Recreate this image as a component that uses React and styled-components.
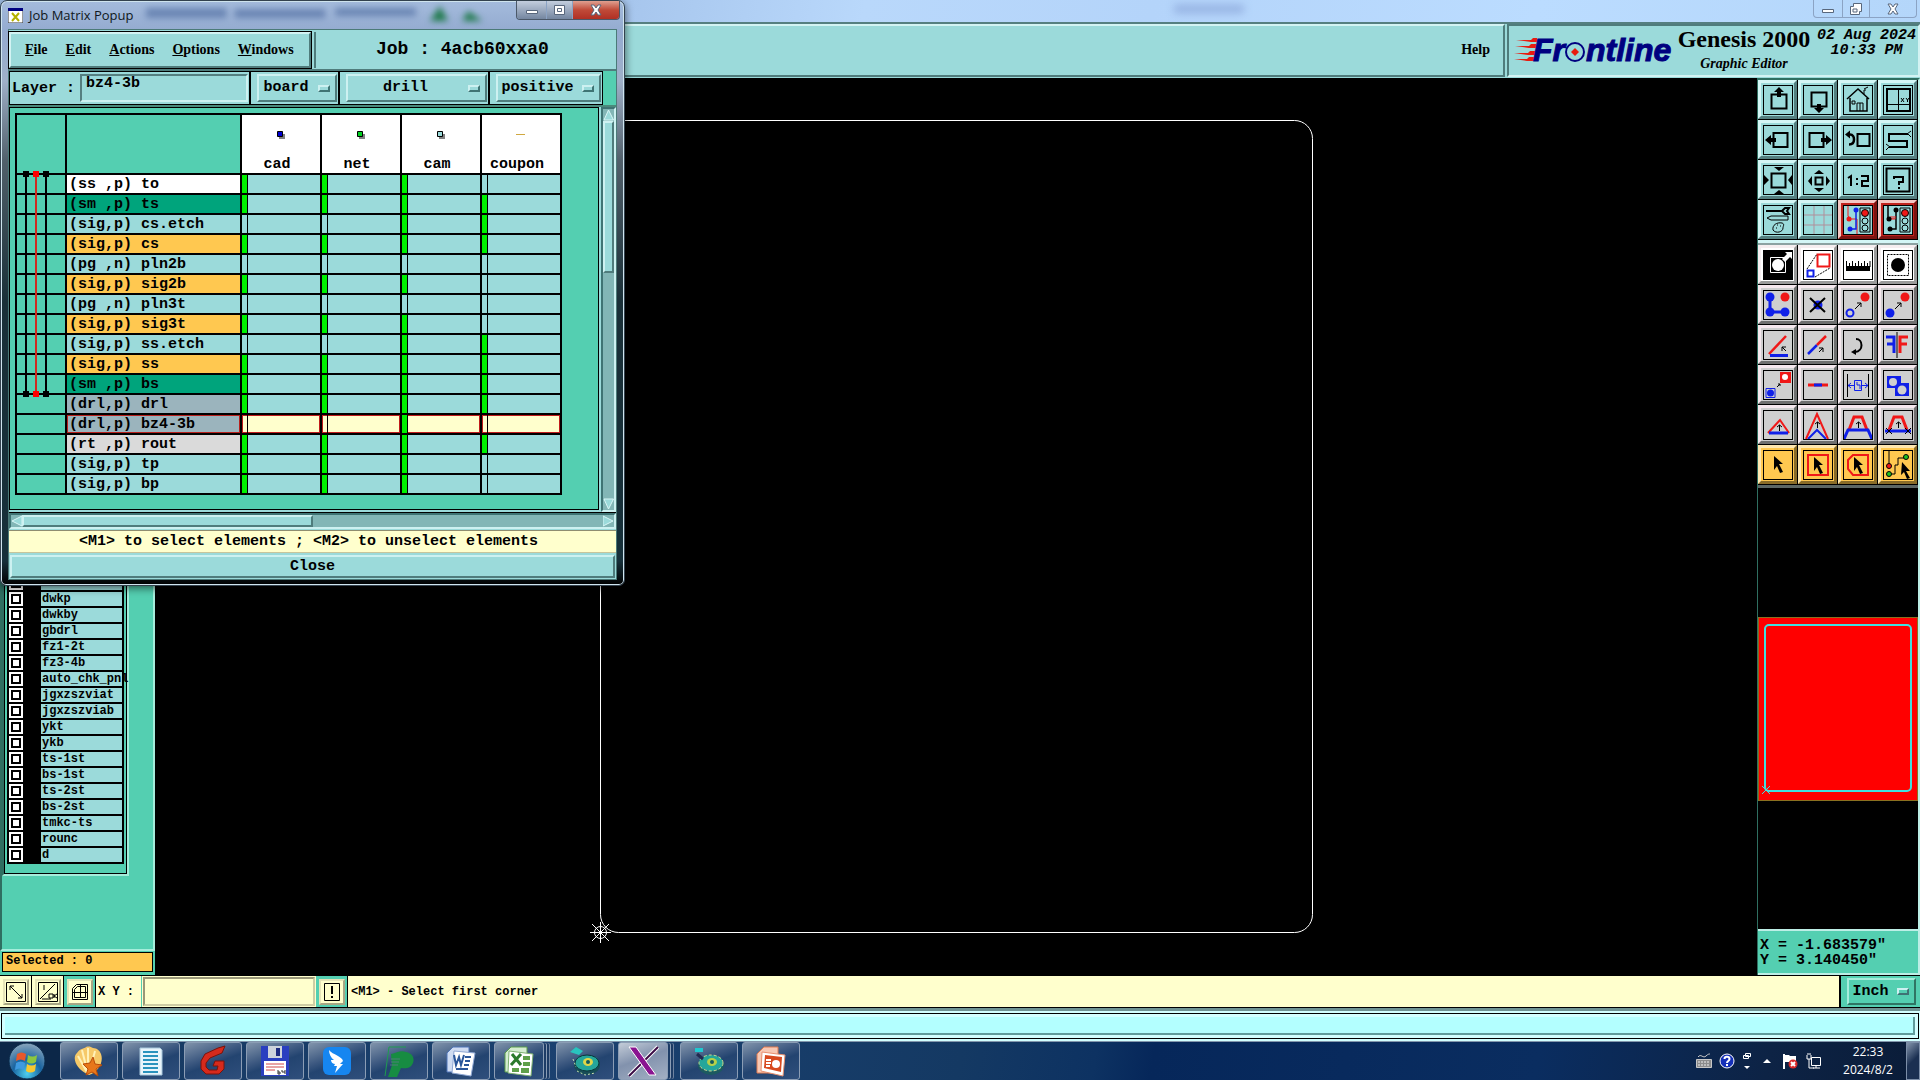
import styled, { createGlobalStyle, css } from "styled-components";

const MONO = `"Liberation Mono", "DejaVu Sans Mono", monospace`;
const SERIF = `"Liberation Serif", "DejaVu Serif", serif`;
const SANS = `"Open Sans", "Noto Sans", sans-serif`;

const CYAN = "#9bdada";
const GREEN = "#54cfb1";
const CREAM = "#ffffcd";
const AMBER = "#ffc850";
const NAVY = "#000080";

const raised = (light, dark, size = 2) => css`
  border: ${size}px solid;
  border-color: ${light} ${dark} ${dark} ${light};
`;

const GlobalStyle = createGlobalStyle`
  * {
    box-sizing: border-box;
  }
  body {
    margin: 0;
    background: #000;
    color: #000;
    font-family: ${MONO};
    overflow: hidden;
  }
  button, input, select {
    margin: 0;
    padding: 0;
    border: 0;
    border-radius: 0;
    background: none;
    color: inherit;
    font: inherit;
    appearance: none;
    outline: none;
  }
  svg {
    display: block;
  }
`;

/* ---------- main window ---------- */

const Screen = styled.div`
  position: relative;
  display: flex;
  flex-direction: column;
  height: 100vh;
`;

const TitleBar = styled.div`
  display: flex;
  justify-content: flex-end;
  height: 22px;
  padding-right: 3px;
  background: linear-gradient(100deg, #a3c2ea 30%, #b9d8fb 45%, #b4d4fa 60%, #bbdcff 80%, #b4d6fa);
`;

const TitleSmudge = styled.div`
  width: 70px;
  height: 8px;
  margin: 5px auto 0 1174px;
  background: #7d97cf;
  opacity: 0.6;
  filter: blur(4px);
`;

const WindowButtons = styled.div`
  display: flex;
  height: ${(props) => (props.$dark ? 19 : 18)}px;
  border: 1px solid ${(props) => (props.$dark ? "#4b5868" : "#8ba3c4")};
  border-top: 0;
  border-radius: 0 0 4px 4px;
  overflow: hidden;
`;

const WindowButton = styled.button`
  display: flex;
  align-items: center;
  justify-content: center;
  width: ${(props) => props.$width}px;
  background: ${(props) => props.$bg || "transparent"};
  & + & {
    border-left: 1px solid #8ba3c4;
  }
`;

const Header = styled.header`
  display: flex;
  gap: 2px;
  height: 56px;
  padding-bottom: 1px;
  border-top: 2px solid #557f80;
  background: ${CYAN};
`;

const MenuStrip = styled.div`
  flex: 1;
  display: flex;
  align-items: center;
  justify-content: flex-end;
  padding: 0 13px 2px 0;
  ${raised("#d3f3f3", "#4f7c7c")}
`;

const MenuButton = styled.button`
  font: bold 14px/20px ${SERIF};
  &::first-letter {
    text-decoration: ${(props) => (props.$plain ? "none" : "underline")};
  }
`;

const Brand = styled.div`
  display: flex;
  width: 413px;
  padding-left: 4px;
  ${raised("#4f7c7c", "#d3f3f3")}
`;

const BrandTitles = styled.div`
  display: flex;
  flex-direction: column;
  align-items: center;
  width: 134px;
`;

const Product = styled.div`
  font: bold 24px/26px ${SERIF};
  white-space: nowrap;
`;

const Editor = styled.div`
  font: italic bold 14px/24px ${SERIF};
`;

const DateBox = styled.div`
  flex: 1;
  padding: 2px 0 0 4px;
  text-align: center;
  font: italic bold 15px/15px ${MONO};
  white-space: nowrap;
`;

const Main = styled.main`
  flex: 1;
  display: flex;
  min-height: 0;
`;

const Sidebar = styled.aside`
  display: flex;
  flex-direction: column;
  justify-content: flex-end;
  width: 155px;
  background: ${GREEN};
`;

const LayerArea = styled.div`
  flex: 1;
  display: flex;
  flex-direction: column;
  justify-content: flex-end;
  align-items: flex-start;
  padding-bottom: 73px;
  border-left: 2px solid #2f6f61;
  border-right: 2px solid #a5eddb;
  border-bottom: 2px solid #a5eddb;
`;

const LayerFrame = styled.div`
  width: 127px;
  ${raised("#2f6f61", "#a5eddb")}
`;

const LayerInner = styled.div`
  border: 1px solid #000;
  border-top: 0;
  padding: 0 2px 9px 2px;
`;

const LayerList = styled.div`
  display: flex;
  flex-direction: column;
  gap: 2px;
  padding: 2px;
  background: #000;
`;

const LayerRow = styled.label`
  display: flex;
  justify-content: space-between;
  height: 14px;
  font: bold 12px/15px ${MONO};
`;

const LayerCheck = styled.input`
  width: 14px;
  height: 14px;
  background: #fff;
  box-shadow: inset 0 0 0 2px #fff, inset 0 0 0 4px #000;
`;

const LayerName = styled.span`
  width: 81px;
  padding-left: 1px;
  background: ${CYAN};
  white-space: nowrap;
`;

const Selected = styled.div`
  margin: 1px 2px 3px;
  height: 20px;
  padding-left: 3px;
  border: 1px solid #000;
  background: ${AMBER};
  font: bold 12px/17px ${MONO};
`;

const Board = styled.div`
  flex: 1;
  background: #000;
`;

const Tools = styled.aside`
  display: flex;
  flex-direction: column;
  width: 163px;
  border-top: 2px solid #2f6f61;
  border-left: 1px solid #2f6f61;
  border-right: 2px solid #bdeee6;
`;

const ToolGrid = styled.div`
  display: grid;
  grid-template-columns: repeat(4, 39px);
  grid-auto-rows: 39px;
  gap: 1px;
  padding-bottom: 1px;
  background: #000;
  border-bottom: ${(props) => props.$edge};
`;

// face, light edge, dark edge, icon ground
const toolSkins = {
  cyan: ["#9bdada", "#d4f6f6", "#557f80", "#9bdada"],
  white: ["#ffffff", "#f6eef0", "#9a9a9a", "#ffffff"],
  grey: ["#cfcfcf", "#f6e8ee", "#6f6f6f", "#cfcfcf"],
  amber: ["#ffc850", "#ffe7b0", "#8a6c28", "#ffc850"],
  alert: ["#c0241e", "#f3c8c4", "#7c1410", "#9bdada"],
};

const ToolButton = styled.button`
  display: flex;
  align-items: center;
  justify-content: center;
  background: ${(props) => toolSkins[props.$skin][0]};
  ${(props) => raised(toolSkins[props.$skin][1], toolSkins[props.$skin][2], 3)}
  svg {
    width: 30px;
    height: 30px;
    border: 1px solid #000;
    background: ${(props) => toolSkins[props.$skin][3]};
    fill: none;
    stroke: #000;
    stroke-width: 2;
  }
`;

const Navigator = styled.div`
  flex: 1;
  display: flex;
  align-items: center;
  background: #000;
`;

const RedBoard = styled.div`
  flex: 1;
  padding: 6px 5px 8px;
  background: #f00;
  border: 1px solid #8a7020;
  svg {
    overflow: visible;
  }
`;

const Coordinates = styled.output`
  display: block;
  height: 46px;
  padding: 7px 2px;
  border-top: 2px solid #bdeee6;
  border-bottom: 2px solid #bdeee6;
  background: ${GREEN};
  font: bold 15px/15px ${MONO};
  white-space: pre;
`;

const CommandBar = styled.div`
  display: flex;
  align-items: stretch;
  height: 33px;
  border-top: 1px solid #000;
  border-bottom: 1px solid #000;
  background: ${CREAM};
  font: bold 12px/32px ${MONO};
`;

const CommandCell = styled.div`
  display: flex;
  align-items: center;
  justify-content: center;
  width: 32px;
  border-right: 1px solid #000;
  background: ${(props) => (props.$green ? GREEN : CREAM)};
`;

const CommandButton = styled.button`
  width: 26px;
  height: 26px;
  background: ${CREAM};
  ${raised("#e6e4b8", "#a8a684")}
  svg {
    width: 22px;
    height: 22px;
    fill: none;
    stroke: #000;
    stroke-width: 1;
  }
`;

const CommandLabel = styled.label`
  width: 46px;
  padding-left: 2px;
  border-right: 1px solid ${GREEN};
`;

const CommandInput = styled.input`
  width: 172px;
  margin: 1px 1px;
  padding-left: 4px;
  ${raised("#9a9878", "#cfcda4")}
`;

const CommandHint = styled.div`
  flex: 1;
  padding-left: 3px;
`;

const UnitCell = styled.div`
  display: flex;
  width: 81px;
  padding: 2px 4px 2px 6px;
  border-left: 2px solid #000;
  background: ${GREEN};
`;

const FooterBar = styled.div`
  height: 33px;
  padding: 2px 1px;
  background: #d2ffff;
  border-top: 3px solid #6f9393;
`;

const FooterInner = styled.div`
  height: 26px;
  padding: 3px;
  border: 1px solid #000;
  div {
    height: 18px;
    background: #b3ffff;
    border-right: 2px solid #5f9c9c;
    border-bottom: 2px solid #5f9c9c;
  }
`;

/* ---------- option menus ---------- */

const OptionBox = styled.div`
  flex: 1;
  display: flex;
  align-items: center;
  padding: 0 5px 0 3px;
  font: bold 15px/20px ${MONO};
  ${(props) => raised(props.$green ? "#a5eddb" : "#cdf1f1", props.$green ? "#2f7564" : "#4f7c7c")}
`;

const OptionSelect = styled.select`
  flex: 1;
  min-width: 0;
  padding-right: 8px;
  text-align: center;
  text-align-last: center;
`;

const Knob = styled.span`
  width: 12px;
  height: 7px;
  ${raised("#cdf1f1", "#3f7474")}
`;

const OptionMenu = ({ label, value, green }) => (
  <OptionBox $green={green}>
    <OptionSelect aria-label={label} defaultValue={value}>
      <option>{value}</option>
    </OptionSelect>
    <Knob />
  </OptionBox>
);

/* ---------- job matrix popup ---------- */

const Popup = styled.section`
  position: absolute;
  top: 0;
  left: 0;
  width: 625px;
  padding: 0 7px 5px;
  border: 1px solid #33424e;
  border-radius: 7px 7px 6px 6px;
  background: linear-gradient(180deg, #a4bbdc 0, #94abd0 30px, #9fb0c8 80px, #51606b 160px, #1a3038 300px, #16303a 560px, #000 100%);
  box-shadow: inset 0 0 0 1px #cfe4ee, 0 2px 8px rgba(0, 0, 0, 0.6);
`;

const PopupTitle = styled.div`
  display: flex;
  height: 28px;
  margin-right: -3px;
  color: #101820;
  font: 13px/28px ${SANS};
`;

const PopupIcon = styled.svg`
  width: 15px;
  height: 15px;
  margin: 7px 6px 0 0;
`;

const Reflection = styled.svg`
  flex: 1;
  height: 28px;
  filter: blur(3px);
`;

const PopupBody = styled.div`
  display: flex;
  flex-direction: column;
  background: ${CYAN};
  border: 1px solid #4b7a78;
`;

const MenuRow = styled.div`
  display: flex;
  gap: 3px;
  height: 41px;
  border-bottom: 2px solid #4f7c7c;
  padding: 2px 0 1px;
`;

const PopupMenu = styled.nav`
  display: flex;
  align-items: center;
  gap: 18px;
  width: 302px;
  padding-left: 14px;
  outline: 1px solid #000;
  ${raised("#d3f3f3", "#4f7c7c")}
`;

const JobName = styled.h1`
  flex: 1;
  margin: 0;
  padding-left: 60px;
  border-left: 2px solid #4f7c7c;
  font: bold 18px/34px ${MONO};
  white-space: pre;
`;

const LayerBar = styled.div`
  display: flex;
  height: 34px;
  padding-right: 13px;
  background: ${GREEN};
  font: bold 15px/30px ${MONO};
`;

const LayerField = styled.div`
  display: flex;
  width: 241px;
  padding: 2px 1px 2px 2px;
  border: 1px solid #000;
  background: ${CYAN};
  label {
    width: 68px;
    white-space: pre;
  }
`;

const LayerInput = styled.input`
  flex: 1;
  min-width: 0;
  padding: 0 0 8px 4px;
  line-height: 16px;
  ${raised("#557f80", "#cdf1f1")}
`;

const OptionCell = styled.div`
  display: flex;
  flex: ${(props) => props.$grow};
  padding: 2px 1px 2px 6px;
  border: 1px solid #000;
  background: ${CYAN};
`;

const MatrixArea = styled.div`
  display: flex;
  height: 408px;
  gap: 2px;
  background: ${CYAN};
  border-top: 2px solid #4b8a7c;
  border-bottom: 1px solid #000;
`;

const MatrixPane = styled.div`
  position: relative;
  flex: 1;
  margin-bottom: 2px;
  padding: 5px 0 0 5px;
  border: 1px solid #000;
  background: ${GREEN};
`;

const Table = styled.table`
  border-spacing: 2px;
  background: #000;
  font: bold 15px/16px ${MONO};
  white-space: pre;
  table-layout: fixed;
  width: 547px;
  td,
  th {
    height: 18px;
    padding: 0;
    font-weight: bold;
    text-align: left;
  }
`;

const Corner = styled.th`
  width: ${(props) => props.$width}px;
  background: ${GREEN};
`;

const StepHead = styled.th`
  background: #fff;
  && {
    height: 58px;
    text-align: center;
    vertical-align: bottom;
  }
  svg {
    margin: 0 auto 15px;
  }
  span {
    display: block;
    padding-right: 8px;
  }
`;

const Gutter = styled.td`
  background: ${GREEN};
`;

const LayerCell = styled.th`
  background: ${(props) => props.$bg};
  text-indent: 2px;
  box-shadow: ${(props) => (props.$on ? "inset 0 0 0 1px #b8201c" : "none")};
  && {
    padding-top: 2px;
  }
`;

const StepCell = styled.td`
  background: ${(props) => (props.$on ? CREAM : CYAN)};
  box-shadow: ${(props) => (props.$on ? "inset 0 0 0 1px #c01c1c" : "none")};
`;

const Mark = styled.span`
  display: block;
  width: 6px;
  height: 18px;
  border-right: 1px solid #000;
  background: ${(props) => (props.$filled ? "#00f000" : "transparent")};
`;

const DrillSpans = styled.svg`
  position: absolute;
  top: 62px;
  left: 11px;
  width: 40px;
  height: 230px;
`;

const ScrollTrack = styled.div`
  display: flex;
  flex-direction: ${(props) => (props.$vertical ? "column" : "row")};
  ${(props) => (props.$vertical ? "width: 15px;" : "height: 16px;")}
  background: #82b6b6;
  ${raised("#3f7474", "#cdf1f1")}
  svg {
    flex: none;
  }
`;

const ScrollThumb = styled.div`
  flex: none;
  ${(props) => (props.$vertical ? "height: 152px;" : "width: 291px;")}
  margin-${(props) => (props.$vertical ? "bottom" : "right")}: auto;
  background: ${CYAN};
  ${raised("#cdf1f1", "#4f7c7c")}
`;

const PopupHint = styled.div`
  height: 23px;
  margin-top: 1px;
  padding-right: 8px;
  border-top: 1px solid #8f8d70;
  border-bottom: 1px solid #c7c59c;
  background: ${CREAM};
  font: bold 15px/22px ${MONO};
  text-align: center;
`;

const CloseButton = styled.button`
  height: 23px;
  margin: 2px 1px 1px;
  font: bold 15px/20px ${MONO};
  ${raised("#cdf1f1", "#4f7c7c")}
`;

/* ---------- taskbar ---------- */

const Taskbar = styled.footer`
  display: flex;
  align-items: stretch;
  height: 39px;
  border-top: 1px solid #8397ac;
  background: linear-gradient(100deg, #16385f 0%, #1b4170 30%, #143963 50%, #0d3262 57%, #06275a 60%, #0a2d60 80%, #0d2345 92%, #0a1c38 100%);
`;

const StartButton = styled.button`
  width: 60px;
  padding-left: 8px;
  background: #0c2748;
`;

const Tasks = styled.div`
  flex: 1;
  display: flex;
  gap: 4px;
`;

const Task = styled.button`
  display: flex;
  align-items: center;
  justify-content: center;
  width: 58px;
  border: 1px solid #8b9db5;
  border-radius: 3px;
  background: ${(props) =>
    props.$active
      ? "linear-gradient(160deg, #c3ccd8, #8292ad 45%, #a3b0c4)"
      : "linear-gradient(160deg, #8194ab 0, #3c5880 40%, #234470 55%, #2f4f7c)"};
  ${(props) =>
    props.$stacked &&
    css`
      width: 50px;
      margin-right: 8px;
      box-shadow: 3px 0 0 -1px #1d3c66, 4px 0 0 -1px #8b9db5, 6px 0 0 -1px #1d3c66, 7px 0 0 -1px #6f83a0;
    `}
`;

const Tray = styled.div`
  display: flex;
  align-items: center;
  color: #fff;
`;

const TrayIcons = styled.div`
  display: flex;
  align-items: center;
  gap: 7px;
`;

const Clock = styled.time`
  width: 78px;
  padding-left: 2px;
  margin-left: 6px;
  text-align: center;
  font: 12px/18px ${SANS};
`;

const ShowDesktop = styled.button`
  align-self: stretch;
  width: 14px;
  border: 1px solid #7c8ea8;
  background: linear-gradient(135deg, #8394ab, #1b3052 50%);
`;

/* ---------- data ---------- */

const matrixRows = [
  ["(ss ,p) to", "#fff", "1110"],
  ["(sm ,p) ts", "#00a47c", "1111"],
  ["(sig,p) cs.etch", CYAN, "0011"],
  ["(sig,p) cs", AMBER, "1111"],
  ["(pg ,n) pln2b", CYAN, "0000"],
  ["(sig,p) sig2b", AMBER, "1110"],
  ["(pg ,n) pln3t", CYAN, "0000"],
  ["(sig,p) sig3t", AMBER, "1110"],
  ["(sig,p) ss.etch", CYAN, "0011"],
  ["(sig,p) ss", AMBER, "1111"],
  ["(sm ,p) bs", "#00a47c", "1111"],
  ["(drl,p) drl", "#9bb4bd", "1111"],
  ["(drl,p) bz4-3b", "#9bb4bd", "0010"],
  ["(rt ,p) rout", "#dadada", "1111"],
  ["(sig,p) tp", CYAN, "1110"],
  ["(sig,p) bp", CYAN, "1110"],
];

const steps = [
  ["cad", "#0000d0"],
  ["net", "#00d020"],
  ["cam", CYAN],
  ["coupon", null],
];

const layers = [
  "",
  "dwkp",
  "dwkby",
  "gbdrl",
  "fz1-2t",
  "fz3-4b",
  "auto_chk_pnl",
  "jgxzszviat",
  "jgxzszviab",
  "ykt",
  "ykb",
  "ts-1st",
  "bs-1st",
  "ts-2st",
  "bs-2st",
  "tmkc-ts",
  "rounc",
  "d",
];

const RED = "#f01818";
const BLUE = "#1020e8";

const Arrow = (props) => (
  <path d="M10 8l8 9h-4l4 7-3 1-3-7-3 3z" fill="#000" stroke="none" {...props} />
);

const viewTools = [
  ["Pan up", "cyan", <><path d="M7.500 8.500h15v14h-15z" /><path d="M15 1l5 5h-3v5h-4V6h-3z" fill="#000" stroke="none" /></>],
  ["Pan down", "cyan", <><path d="M7.500 6.500h15v14h-15z" /><path d="M15 27l5-5h-3v-4h-4v4h-3z" fill="#000" stroke="none" /></>],
  ["Home", "cyan", <><path d="M3 13L14 3l11 10M6 12v13h17V12" strokeWidth="1.500" /><path d="M20 8V4h2M20 3l4-2M13 25v-8h6v8M16 17v8M8 15h3v3H8z" strokeWidth="1" /></>],
  ["Coordinates", "cyan", <><path d="M3 3h23v22H3z" /><path d="M14.500 3v22M3 18.500h23" strokeWidth="1" /><path d="M17 12l3 4M20 12l-3 4M22 12l1.500 2 1.500-2M23.500 14v2" strokeWidth="1" /></>],
  ["Pan left", "cyan", <><path d="M9.500 7h14v14h-14z" /><path d="M1 14l6-5v3h5v4H7v3z" fill="#000" stroke="none" /></>],
  ["Pan right", "cyan", <><path d="M5.500 7h14v14h-14z" /><path d="M28 14l-6-5v3h-5v4h5v3z" fill="#000" stroke="none" /></>],
  ["Previous view", "cyan", <><path d="M13.500 8h12v12h-12z" /><path d="M3 8.500h3c3 0 4 3 4 5s-1 5-5 5" strokeWidth="2.500" /><path d="M1 8.500l5-4v8z" fill="#000" stroke="none" /></>],
  ["Serpentine", "cyan", <><path d="M24 8H5v7h18v6H5" /><path d="M23 8l4-3M24 8l3 3M6 21l-4-3M5 21l-3 3" strokeWidth="1" /></>],
  ["Zoom in", "cyan", <><path d="M7.500 7.500h14v14h-14z" /><path d="M15 5l-5-4h10zM15 24l-5 4h10zM5 14L0 9v10zM24 14l4-5v10z" fill="#000" stroke="none" /></>],
  ["Zoom out", "cyan", <><path d="M11.500 11.500h7v7h-7z" /><path d="M15 4l-5 4h10zM15 26l-5-4h10zM4 15l4-5v10zM26 15l-4-5v10z" fill="#000" stroke="none" /></>],
  ["Scale 1:2", "cyan", <path d="M4 12l3-2v10M13 12v2M13 17v2M17 10h7v5h-6v5h7" />],
  ["Query", "cyan", <><path d="M2.500 2.500h23v23h-23z" /><path d="M10 13v-2h9v5h-4v3M15 21v2" /></>],
  ["Options", "cyan", <><path d="M2 5h17M18 5l3-3h4l-2 3 2 3h-4z" strokeWidth="2" /><path d="M3 12l4-2h17v4H7z" strokeWidth="1" /><path d="M9 24c-1-5 4-8 9-7 3 1 1 3 1 5 0 4-7 6-10 2zM13 19h1M16 20h1M12 22h1" strokeWidth="1" /></>],
  ["Grid", "cyan", <path d="M10 0v28M20 0v28M0 9h28M0 19h28" stroke="#b08f9a" strokeWidth="1" />],
  ["Control", "alert", <><path d="M4 0v10l2 3h7v15" stroke={RED} strokeWidth="1" /><path d="M12 5v18H7" stroke={BLUE} strokeWidth="1.500" /><g stroke="none"><circle cx="5" cy="13" r="2.500" fill={RED} /><circle cx="12" cy="4" r="2.500" fill={BLUE} /><circle cx="6" cy="23" r="2.500" fill={BLUE} /></g><g strokeWidth="1"><path d="M16 2h10v24H16z" /><circle cx="21" cy="7" r="3.500" fill={RED} /><circle cx="21" cy="15" r="3" /><circle cx="21" cy="22" r="3" /></g></>],
  ["Netlist control", "alert", <><path d="M4 0v13M12 5v18H7" strokeWidth="1.500" /><path d="M5 13h6M7 10v3M9 10v3M11 10v3" stroke={RED} strokeWidth="1" /><g stroke="none" fill="#000"><circle cx="5" cy="13" r="2.500" /><circle cx="12" cy="4" r="2.500" /><circle cx="6" cy="23" r="2.500" /></g><g strokeWidth="1"><path d="M16 2h10v24H16z" /><circle cx="21" cy="7" r="3.500" fill={RED} /><circle cx="21" cy="15" r="3" /><circle cx="21" cy="22" r="3" /></g></>],
];

const editTools = [
  ["Lens", "white", <><path d="M0 0h28v28H0z" fill="#000" stroke="none" /><path d="M6.500 6.500h15v15h-15z" stroke="#fff" strokeWidth="1" /><circle cx="14" cy="14" r="6" fill="#fff" stroke="none" /><path d="M18 8l5-5-2-2h7v7l-2-2-5 5z" fill="#fff" stroke="none" /></>],
  ["Resize", "white", <><path d="M13.500 3.500h12v12h-12z" stroke={RED} /><path d="M3.500 19.500h6v6h-6z" stroke={BLUE} /><path d="M3 18L13 3M11 26l15-9" strokeWidth="1" strokeDasharray="2 1" /></>],
  ["Measure", "white", <><path d="M2 17.500h24" strokeWidth="5" /><path d="M2.500 10v6M5.500 12v4M8.500 10v6M11.500 12v4M14.500 10v6M17.500 12v4M20.500 10v6M23.500 12v4M26 10v6" strokeWidth="1" /></>],
  ["Select shape", "white", <><path d="M3.500 3.500h21v21h-21z" strokeWidth="1" strokeDasharray="2 1" /><circle cx="14" cy="14" r="7" fill="#000" stroke="none" /></>],
  ["Select net", "grey", <><path d="M6 6v15h14" stroke={BLUE} strokeWidth="3" /><g fill={BLUE} stroke="none"><circle cx="6" cy="6" r="4.500" /><circle cx="6" cy="21" r="4.500" /><circle cx="21" cy="21" r="4.500" /><circle cx="21" cy="6" r="4.500" fill={RED} /></g></>],
  ["Delete", "grey", <><circle cx="14" cy="14" r="4.500" fill={BLUE} stroke="none" /><path d="M6 7l15 14M21 7L6 21" /></>],
  ["Copy", "grey", <><circle cx="6" cy="22" r="3.500" stroke={BLUE} /><circle cx="21" cy="6" r="4.500" fill={RED} stroke="none" /><path d="M11 18l6-6M13 12h4v4" strokeWidth="1" /></>],
  ["Move", "grey", <><circle cx="6" cy="22" r="4.500" fill={BLUE} stroke="none" /><circle cx="21" cy="6" r="4.500" fill={RED} stroke="none" /><path d="M11 18l6-6M13 12h4v4" strokeWidth="1" /></>],
  ["Rotate", "grey", <><path d="M5 23L22 5" stroke={RED} strokeWidth="2.500" /><path d="M6 24.500h18" stroke={BLUE} strokeWidth="3" /><path d="M22 20l-4-4M18 20v-4h4" strokeWidth="1" /></>],
  ["Stretch", "grey", <><path d="M4 23l9-9" stroke={BLUE} strokeWidth="2.500" /><path d="M13 14l9-9" stroke={RED} strokeWidth="2.500" /><path d="M15 21l4-4M15 17h4v4" strokeWidth="1" /></>],
  ["Undo", "grey", <><path d="M12 8c7 0 8 12-1 13" /><path d="M7 21l5-3v6z" fill="#000" stroke="none" /></>],
  ["Mirror", "grey", <><path d="M2 6h8v16M3 13h7" stroke={BLUE} strokeWidth="3" /><path d="M24 6h-8v16M23 13h-7" stroke={RED} strokeWidth="3" /><path d="M13 1v26" strokeWidth="1" /></>],
  ["Replace", "grey", <><path d="M16 1h11v11H16z" fill={RED} stroke="none" /><circle cx="21" cy="6" r="3" fill="#fff" stroke="none" /><path d="M2 17.500h9v9H2z" stroke={BLUE} strokeWidth="1" /><circle cx="6.500" cy="22" r="3.500" fill={BLUE} stroke="none" /><path d="M13 16l3-3M14 13h2v2" strokeWidth="1" /></>],
  ["Join lines", "grey", <><path d="M4 14h20" stroke={RED} strokeWidth="3" /><path d="M10 14h8" stroke={BLUE} strokeWidth="3" /></>],
  ["Spacing", "grey", <><path d="M3.500 3v23M24.500 3v23" strokeWidth="1" /><path d="M4 14.500h6M18 14.500h6M7 12l-3 2.500L7 17M21 12l3 2.500L21 17M10.500 9.500h7v10h-7zM13 11v3h3v4" stroke={BLUE} strokeWidth="1" /></>],
  ["Merge", "grey", <><path d="M3 5h14v7h8v13H11v-8H3z" fill={BLUE} stroke="none" /><circle cx="9" cy="11" r="4" fill="#cfcfcf" stroke="none" /><circle cx="18" cy="19" r="4.500" fill="#cfcfcf" stroke="none" /></>],
  ["Arc segment", "grey", <><path d="M4 22L16 9l9 13" stroke={RED} /><path d="M5 22h19" stroke={BLUE} strokeWidth="3" /><path d="M15.500 20v-6M13 16l2.500-2 2.500 2" strokeWidth="1" /></>],
  ["Peak segment", "grey", <><path d="M2 28L13 3l11 25" stroke={RED} /><path d="M4 28l9-9 9 9" stroke={BLUE} /><path d="M13.500 17v-6M11 13l2.500-2 2.500 2" strokeWidth="1" /></>],
  ["Slide segment", "grey", <><path d="M5 19L10 6h8l5 13" stroke={RED} strokeWidth="3" /><path d="M0 28l4-9h20l4 9" stroke={BLUE} strokeWidth="3" /><path d="M14.500 17v-6M12 13l2.500-2 2.500 2" strokeWidth="1" /></>],
  ["Slide ends", "grey", <><path d="M5 19L10 6h8l5 13" stroke={RED} strokeWidth="3" /><path d="M1 20h26" stroke={BLUE} strokeWidth="3" /><path d="M14.500 17v-6M12 13l2.500-2 2.500 2M2 17l6 6M8 17l-6 6M21 17l6 6M27 17l-6 6" strokeWidth="1" /></>],
  ["Select feature", "amber", <path d="M10 5l9 8h-4l4 8-3 1-3-7-3 4z" fill="#000" stroke="none" />],
  ["Select in box", "amber", <><path d="M4 4h20v20H4z" stroke={RED} /><path d="M10 6l9 8h-4l4 8-3 1-3-7-3 4z" fill="#000" stroke="none" /></>],
  ["Select in polygon", "amber", <><path d="M9 4h15v20H9l-5-6V9z" stroke={RED} /><path d="M10 6l9 8h-4l4 8-3 1-3-7-3 4z" fill="#000" stroke="none" /></>],
  ["Select connected", "amber", <><path d="M5 0v15M5 23h6v-9h3V7h8" strokeWidth="1" /><g strokeWidth="1"><circle cx="5" cy="15" r="2.500" fill={RED} /><circle cx="5" cy="23" r="2.500" fill="#20c020" /><circle cx="22" cy="6" r="2.500" fill="#20c020" /></g><Arrow transform="translate(8 3)" /></>],
];

const tasks = [
  { name: "Shell browser", art: <><path d="M16 30C2 24-1 12 4 8c3-5 7-4 9-6 3-1 5 0 7 1 4 0 7 3 8 6 3 8-3 18-12 21z" fill="#f6c968" /><path d="M15 29L5 11M15 29L9 5M15 29V3M16 29l6-23" stroke="#fff1b8" strokeWidth="2" /><path d="M20 12l2 7 7 1-6 4 2 7-6-4-6 3 2-6-5-5 7-1z" fill="#e8771a" stroke="#b84b08" /></> },
  { name: "Notepad", art: <><path d="M5 3h20l2 2v25H5z" fill="#e8f4fb" stroke="#a8c8dc" /><path d="M8 7h15M8 11h15M8 15h15M8 19h15M8 23h15M8 27h15" stroke="#2a92bd" strokeWidth="2" /></> },
  { name: "Genesis", art: <path d="M28 1l-7 2-13 6-4 7v8l5 5h13l5-5v-8h-9l-2 5h5l-1 4h-8l-3-3v-4l4-5 12-5z" fill="#d62a1c" stroke="#7a130c" /> },
  { name: "Save", art: <><path d="M2 1h28v30H2z" fill="#2a3fc0" /><path d="M9 1h14v12H9z" fill="#cdd3dc" /><path d="M17 3h4v8h-4z" fill="#1c2a80" /><path d="M5 16h22v14H5z" fill="#fff" /><path d="M7 19h18M7 22h18M7 25h9" stroke="#d04848" /><path d="M19 25v4h2v-2h-2M23 25v2h3M26 25v4" stroke="#333" fill="none" /></> },
  { name: "DingTalk", art: <><rect x="2" y="2" width="28" height="28" rx="6" fill="#1686f0" /><path d="M8 5c4 5 13 6 14 11l-3 3h3l-8 9 2-7h-3l1-2c-3 0-4-3-4-4h3c-3-2-5-6-5-10z" fill="#fff" /></> },
  { name: "Peak", art: <><path d="M2 31L6 2h17" fill="none" stroke="#1e9c50" /><path d="M8 9c6-1 9-4 15-2 6 1 9 6 7 11-2 5-7 6-12 5l-4 9H5l4-12z" fill="#178c42" /><path d="M8 14h9M8 17h8M7 20h8" stroke="#4f7f78" /></> },
  { name: "Word", art: <><path d="M2 8l6-6h16v25H2z" fill="#cfdcf2" stroke="#4f74b8" /><path d="M9 6l21 2-4 23L7 28z" fill="#fff" stroke="#8fa8d4" /><path d="M9 10l2 10 3-8 2 8 3-10M20 12h6M20 16h5M19 20h5M11 24h12" fill="none" stroke="#2b579a" strokeWidth="2" /></> },
  { name: "Excel", stacked: true, art: <><path d="M2 8l6-6h16v25H2z" fill="#d4ecd0" stroke="#5a9c4c" /><path d="M6 6l24 3-2 22L5 28z" fill="#fff" stroke="#7db070" /><path d="M9 9l9 11M18 9L8 20" stroke="#2c7a2c" strokeWidth="3" /><path d="M20 11h7v4h-7zM20 17h7v4h-7zM9 23h7v4H9zM18 23h8v5h-8z" fill="#5fa04a" /></> },
  { name: "InCAM", art: <><ellipse cx="18" cy="20" rx="13" ry="10" fill="#174c56" /><ellipse cx="18" cy="18" rx="12" ry="8" fill="#25a69a" stroke="#0a343a" /><ellipse cx="19" cy="17" rx="5" ry="4" fill="#e0d648" /><ellipse cx="19" cy="17" rx="2" ry="2" fill="#135c60" /><path d="M1 7l6-5 7 4-4 4z" fill="#29c4be" /><path d="M4 14l3 8M8 26l8 4 10-2" stroke="#c8e0b0" fill="none" strokeDasharray="2 2" /></> },
  { name: "Xming", active: true, stacked: true, art: <><path d="M31 2L2 31" stroke="#fff" strokeWidth="4" /><path d="M31 2L2 31" stroke="#3a0a44" strokeWidth="2" /><path d="M2 2h7l20 28h-7z" fill="#8a1490" stroke="#fff" /></> },
  { name: "InPlan", art: <><ellipse cx="18" cy="20" rx="13" ry="10" fill="#1c5a60" /><ellipse cx="18" cy="18" rx="12" ry="8" fill="#25a69a" stroke="#d0d890" strokeDasharray="3 2" /><ellipse cx="19" cy="17" rx="5" ry="4" fill="#b8d048" /><ellipse cx="19" cy="17" rx="2" ry="2" fill="#135c60" /><path d="M2 3h8v4H2z" fill="#20c8d0" /><path d="M4 9l6 5" stroke="#222a50" strokeWidth="3" /></> },
  { name: "PowerPoint", art: <><path d="M2 9l7-7h14v26H2z" fill="#f7c8b4" stroke="#e07a50" /><path d="M7 7l23 3-2 21-22-5z" fill="#fff" stroke="#e89070" /><path d="M10 10l17 2-1 15-17-4z" fill="#d84a20" /><circle cx="21" cy="19" r="4" fill="#fff" /><path d="M11 15h5M11 18h5M11 21h4" stroke="#fff" strokeWidth="2" /></> },
];

const ToolSet = ({ tools, edge }) => (
  <ToolGrid $edge={edge}>
    {tools.map(([name, skin, art]) => (
      <ToolButton key={name} aria-label={name} $skin={skin}>
        <svg viewBox="0 0 28 28">{art}</svg>
      </ToolButton>
    ))}
  </ToolGrid>
);

const FrontlineLogo = () => (
  <svg width="164" height="50" viewBox="0 0 164 50">
    <path d="M3 14h15l2-2h4v4h-6zM2 20h14l2-2h5v4h-7zM1 27h14l2-2h5v4h-7zM1 33h13l2-2h5v4h-7z" fill="#e81c10" />
    <g fill={NAVY} stroke={NAVY} fontFamily="Liberation Sans, Arial, sans-serif" fontSize="32" fontWeight="bold" fontStyle="italic">
      <text x="20" y="35">Fr</text>
      <text x="73" y="35">ntline</text>
    </g>
    <circle cx="62" cy="26" r="9" fill="none" stroke={NAVY} strokeWidth="2" />
    <path d="M62 22l4 4-4 4-4-4z" fill="#e81c10" />
  </svg>
);

const WindowGlyph = ({ kind }) => (
  <svg width="18" height="14" viewBox="0 0 18 14" fill="#fdfdfd" stroke="#58677c">
    {kind === "min" && <path d="M3.500 7.500h11v3h-11z" />}
    {kind === "max" && <path d="M3.500 2.500h10v9h-10zM6.500 5.500h4v3h-4z" />}
    {kind === "restore" && <path d="M6.500 1.500h8v8h-2v3h-9v-8h3zM6 7h4v3H6z" />}
    {kind === "close" && <path d="M4 2h3l2 3 2-3h3l-3 5 3 5h-3L9 9l-2 3H4l3-5z" />}
  </svg>
);

const ScrollArrow = ({ d }) => (
  <svg width="11" height="12" viewBox="0 0 11 12">
    <path d={d} fill={CYAN} stroke="#d9f6f6" />
  </svg>
);

const JobMatrix = () => (
  <Popup>
    <PopupTitle>
      <PopupIcon viewBox="0 0 15 15">
        <path d="M0 0h15v15H0z" fill="#fff" stroke="#333" />
        <path d="M0 0h15v3H0z" fill={NAVY} />
        <path d="M4 5l7 8M11 5l-7 8" stroke="#b4b000" strokeWidth="2" />
      </PopupIcon>
      Job Matrix Popup
      <Reflection viewBox="0 0 380 28" preserveAspectRatio="none">
        <path d="M12 7h80v10H12zM100 8h90v9h-90zM200 7h80v8h-80z" fill="#4a689c" opacity="0.600" />
        <path d="M304 5l8 15h-18zM332 10l14 10h-20z" fill="#207a4c" />
      </Reflection>
      <WindowButtons $dark>
        <WindowButton $width={29} aria-label="Minimize" $bg="linear-gradient(#c3cede, #7486a0)"><WindowGlyph kind="min" /></WindowButton>
        <WindowButton $width={26} aria-label="Maximize" $bg="linear-gradient(#c3cede, #7486a0)"><WindowGlyph kind="max" /></WindowButton>
        <WindowButton $width={47} aria-label="Close window" $bg="linear-gradient(#e0a090, #c04a38 50%, #b03024)"><WindowGlyph kind="close" /></WindowButton>
      </WindowButtons>
    </PopupTitle>
    <PopupBody>
      <MenuRow>
        <PopupMenu>
          {["File", "Edit", "Actions", "Options", "Windows"].map((item) => (
            <MenuButton key={item}>{item}</MenuButton>
          ))}
        </PopupMenu>
        <JobName>Job : 4acb60xxa0</JobName>
      </MenuRow>
      <LayerBar>
        <LayerField>
          <label htmlFor="layer-name">Layer :</label>
          <LayerInput id="layer-name" defaultValue="bz4-3b" />
        </LayerField>
        <OptionCell $grow="0 0 89px"><OptionMenu label="Context" value="board" /></OptionCell>
        <OptionCell $grow="1"><OptionMenu label="Type" value="drill" /></OptionCell>
        <OptionCell $grow="0 0 114px"><OptionMenu label="Polarity" value="positive" /></OptionCell>
      </LayerBar>
      <MatrixArea>
        <MatrixPane>
          <Table>
            <thead>
              <tr>
                <Corner $width={48} />
                <Corner $width={173} />
                {steps.map(([name, color]) => (
                  <StepHead key={name} scope="col">
                    <svg width="12" height="12" viewBox="0 0 12 12">
                      {color ? (
                        <>
                          <path d="M4 4h6v5H4z" fill="#808080" />
                          <path d="M2.500 1.500h5v5h-5z" fill={color} stroke="#000" />
                        </>
                      ) : (
                        <path d="M1 4.500h9" stroke="#d0a840" />
                      )}
                    </svg>
                    <span>{name}</span>
                  </StepHead>
                ))}
              </tr>
            </thead>
            <tbody>
              {matrixRows.map(([name, bg, filled]) => {
                const on = name.endsWith("bz4-3b");
                return (
                  <tr key={name}>
                    <Gutter />
                    <LayerCell scope="row" $bg={bg} $on={on}>{name}</LayerCell>
                    {filled.split("").map((bit, i) => (
                      <StepCell key={i} $on={on}><Mark $filled={bit === "1"} /></StepCell>
                    ))}
                  </tr>
                );
              })}
            </tbody>
          </Table>
          <DrillSpans viewBox="0 0 40 230">
            <path d="M5 4v220M25 4v220" stroke="#000" strokeWidth="2" />
            <path d="M15 4v220" stroke="#d02a20" strokeWidth="2" />
            <path d="M2 1h6v6H2zM22 1h6v6h-6zM2 221h6v6H2zM22 221h6v6h-6z" />
            <path d="M12 1h6v6h-6zM12 221h6v6h-6z" fill="#f00" />
          </DrillSpans>
        </MatrixPane>
        <ScrollTrack $vertical>
          <ScrollArrow d="M5.500 1l5 10H1z" />
          <ScrollThumb $vertical />
          <ScrollArrow d="M5.500 11l5-10H1z" />
        </ScrollTrack>
      </MatrixArea>
      <ScrollTrack>
        <ScrollArrow d="M1 6l10-5v10z" />
        <ScrollThumb />
        <ScrollArrow d="M10 6L0 1v10z" />
      </ScrollTrack>
      <PopupHint>{"<M1> to select elements ; <M2> to unselect elements"}</PopupHint>
      <CloseButton>Close</CloseButton>
    </PopupBody>
  </Popup>
);

const App = () => (
  <Screen>
    <GlobalStyle />
    <TitleBar>
      <TitleSmudge />
      <WindowButtons>
        <WindowButton $width={28} aria-label="Minimize"><WindowGlyph kind="min" /></WindowButton>
        <WindowButton $width={27} aria-label="Restore"><WindowGlyph kind="restore" /></WindowButton>
        <WindowButton $width={47} aria-label="Close"><WindowGlyph kind="close" /></WindowButton>
      </WindowButtons>
    </TitleBar>
    <Header>
      <MenuStrip>
        <MenuButton $plain>Help</MenuButton>
      </MenuStrip>
      <Brand>
        <FrontlineLogo />
        <BrandTitles>
          <Product>Genesis 2000</Product>
          <Editor>Graphic Editor</Editor>
        </BrandTitles>
        <DateBox>
          02 Aug 2024
          <br />
          10:33 PM
        </DateBox>
      </Brand>
    </Header>
    <Main>
      <Sidebar>
        <LayerArea>
          <LayerFrame>
            <LayerInner>
              <LayerList>
                {layers.map((name) => (
                  <LayerRow key={name}>
                    <LayerCheck type="checkbox" aria-label={name || "layer"} />
                    <LayerName>{name}</LayerName>
                  </LayerRow>
                ))}
              </LayerList>
            </LayerInner>
          </LayerFrame>
        </LayerArea>
        <Selected>Selected : 0</Selected>
      </Sidebar>
      <Board>
        <svg width="100%" height="100%" fill="none" stroke="#fff">
          <rect x="445.500" y="42.500" width="712" height="812" rx="18" />
          <circle cx="445.500" cy="854.500" r="6" />
          <path d="M435 854.500h21M445.500 844v21M437 846l17 17M454 846l-17 17" />
        </svg>
      </Board>
      <Tools>
        <ToolSet tools={viewTools} edge="5px ridge #d4f6f6" />
        <ToolSet tools={editTools} edge="3px solid #5c6664" />
        <Navigator>
          <RedBoard>
            <svg width="148" height="168" viewBox="0 0 148 168" fill="none" stroke="#40e0e0">
              <rect x="1" y="1" width="146" height="166" rx="4" strokeWidth="2" />
              <path d="M-2 162l8 8M6 162l-8 8" />
            </svg>
          </RedBoard>
        </Navigator>
        <Coordinates>{'X = -1.683579"\nY = 3.140450"'}</Coordinates>
      </Tools>
    </Main>
    <CommandBar>
      <CommandCell>
        <CommandButton aria-label="Snap to corner">
          <svg viewBox="0 0 22 22"><path d="M1.500 1.500h19v19h-19zM5 5l12 12M5 9V5h4M17 13v4h-4" /></svg>
        </CommandButton>
      </CommandCell>
      <CommandCell>
        <CommandButton aria-label="Snap to line">
          <svg viewBox="0 0 22 22"><path d="M1.500 1.500h19v19h-19zM3 18L18 3M7 4v5M5 18h9M12 13h4v4h-4zM17 13v4M20 13l-3 2 3 2" /></svg>
        </CommandButton>
      </CommandCell>
      <CommandCell $green>
        <CommandButton aria-label="Snap to grid">
          <svg viewBox="0 0 22 22"><path d="M3.500 18.500v-11l4-4h11v15zM5.500 16.500v-8l3-3h8v11zM11.500 4v13M4 11.500h14" /></svg>
        </CommandButton>
      </CommandCell>
      <CommandLabel htmlFor="xy">X Y :</CommandLabel>
      <CommandInput id="xy" />
      <CommandCell $green>
        <CommandButton aria-label="Apply">
          <svg viewBox="0 0 22 22"><path d="M3.500 2.500h15v17h-15z" /><path d="M11 5v8M11 15v2" strokeWidth="2" /></svg>
        </CommandButton>
      </CommandCell>
      <CommandHint>{"<M1> - Select first corner"}</CommandHint>
      <UnitCell><OptionMenu label="Units" value="Inch" green /></UnitCell>
    </CommandBar>
    <FooterBar>
      <FooterInner><div /></FooterInner>
    </FooterBar>
    <Taskbar>
      <StartButton aria-label="Start">
        <svg width="38" height="38" viewBox="0 0 38 38">
          <defs>
            <radialGradient id="orb" cx="50%" cy="85%" r="80%">
              <stop offset="0" stopColor="#4ed0f0" />
              <stop offset="0.500" stopColor="#1a64a0" />
              <stop offset="1" stopColor="#7f9fb8" />
            </radialGradient>
          </defs>
          <circle cx="19" cy="19" r="18" fill="url(#orb)" stroke="#0a2a4a" />
          <path d="M9 12c3-2 6-2 9 0l-1 7c-3-2-6-2-9 0z" fill="#e8582c" />
          <path d="M20 13c3 2 6 2 9 0l-1 7c-3 2-6 2-9 0z" fill="#8cc63e" />
          <path d="M8 21c3-2 6-2 9 0l-1 7c-3-2-6-2-9 0z" fill="#3f9ae0" />
          <path d="M19 22c3 2 6 2 9 0l-1 7c-3 2-6 2-9 0z" fill="#f8c830" />
        </svg>
      </StartButton>
      <Tasks>
        {tasks.map(({ name, art, active, stacked }) => (
          <Task key={name} aria-label={name} $active={active} $stacked={stacked}>
            <svg width="32" height="32" viewBox="0 0 32 32">{art}</svg>
          </Task>
        ))}
      </Tasks>
      <Tray>
        <TrayIcons>
          <svg width="16" height="18" viewBox="0 0 16 18" fill="none" stroke="#c8c8c8">
            <path d="M2 5c3-4 5 2 8-1 2-2 3-2 4-2" />
            <path d="M0.500 7.500h15v8h-15z" fill="#8c8c8c" />
            <path d="M2 10h12M2 13h12" stroke="#eee" strokeDasharray="2 1" />
          </svg>
          <svg width="16" height="16" viewBox="0 0 16 16" fill="none" stroke="#fff">
            <circle cx="8" cy="8" r="7" fill="#1530b8" />
            <path d="M5.500 6c0-3 5-3 5 0 0 2-2.500 2-2.500 4M8 11v2" strokeWidth="2" />
          </svg>
          <svg width="10" height="18" viewBox="0 0 10 18" fill="none" stroke="#fff">
            <path d="M3.500 1.500h5v3h-5zM1.500 3.500h5v3h-5z" />
            <path d="M2 14h6l-3 3z" fill="#fff" stroke="none" />
          </svg>
          <svg width="16" height="16" viewBox="0 0 16 16">
            <path d="M4 10l4-4 4 4z" fill="#fff" />
          </svg>
          <svg width="17" height="16" viewBox="0 0 17 16" fill="none">
            <path d="M2 1v15" stroke="#fff" strokeWidth="2" />
            <path d="M3 2h4l1 1h6v7H8L7 9H3z" fill="#fff" />
            <circle cx="11" cy="11" r="4.500" fill="#d82828" />
            <path d="M9 9l4 4M13 9l-4 4" stroke="#fff" strokeWidth="2" />
          </svg>
          <svg width="16" height="16" viewBox="0 0 16 16" fill="none" stroke="#fff">
            <path d="M5.500 4.500h9v8h-9zM7 15h7M10 13v2M1 2v4h4V2M2 0v2M4 0v2M3 6v9h5" />
          </svg>
        </TrayIcons>
        <Clock>
          22:33
          <br />
          2024/8/2
        </Clock>
        <ShowDesktop aria-label="Show desktop" />
      </Tray>
    </Taskbar>
    <JobMatrix />
  </Screen>
);

export default App;
